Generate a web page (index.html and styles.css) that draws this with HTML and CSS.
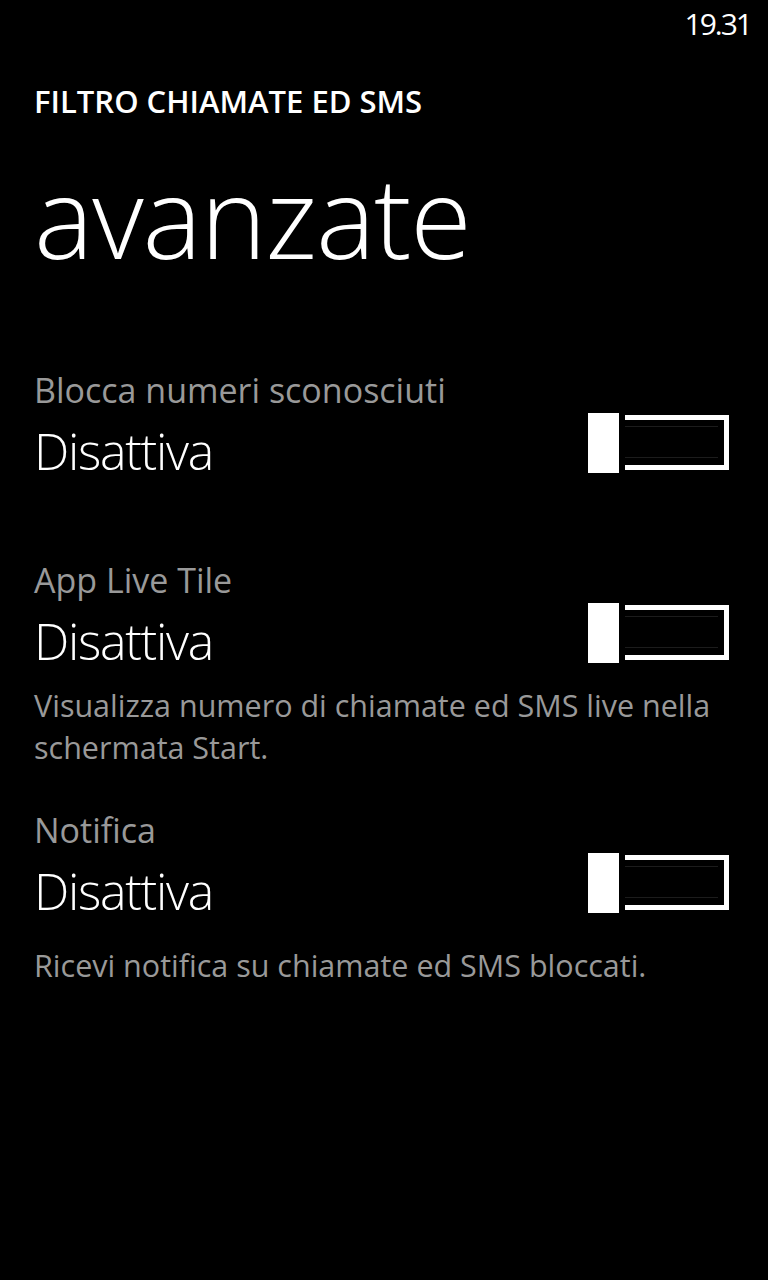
FILE: index.html
```html
<!DOCTYPE html>
<html lang="it">
<head>
  <meta charset="UTF-8">
  <meta name="viewport" content="width=device-width, initial-scale=1.0">
  <title>Filtro chiamate ed SMS - avanzate</title>
  <link rel="stylesheet" href="styles.css">
</head>
<body>
  <!-- Barra di stato -->
  <div class="status">
    <span class="clock">19.31</span>
  </div>

  <!-- Titoli -->
  <header class="titles">
    <div class="app-title">FILTRO CHIAMATE ED SMS</div>
    <h1 class="page-title">avanzate</h1>
  </header>

  <!-- Impostazioni -->
  <main class="settings">
    <section class="setting">
      <div class="setting-label">Blocca numeri sconosciuti</div>
      <div class="setting-row">
        <span class="setting-value">Disattiva</span>
        <span class="toggle"><span class="toggle-thumb"></span><span class="toggle-track"><span class="toggle-fill"></span></span></span>
      </div>
    </section>

    <section class="setting">
      <div class="setting-label">App Live Tile</div>
      <div class="setting-row">
        <span class="setting-value">Disattiva</span>
        <span class="toggle"><span class="toggle-thumb"></span><span class="toggle-track"><span class="toggle-fill"></span></span></span>
      </div>
      <p class="setting-desc">Visualizza numero di chiamate ed SMS live nella schermata Start.</p>
    </section>

    <section class="setting">
      <div class="setting-label">Notifica</div>
      <div class="setting-row">
        <span class="setting-value">Disattiva</span>
        <span class="toggle"><span class="toggle-thumb"></span><span class="toggle-track"><span class="toggle-fill"></span></span></span>
      </div>
      <p class="setting-desc setting-desc--spaced">Ricevi notifica su chiamate ed SMS bloccati.</p>
    </section>
  </main>
</body>
</html>
```

FILE: styles.css
```css
body {
  margin: 0;
  padding: 0;
  background: #000;
  color: #fff;
  font-family: "Open Sans", "Noto Sans", sans-serif;
  width: 768px;
  height: 1280px;
  overflow: hidden;
}
.status {
  height: 48px;
  line-height: 48px;
  font-size: 30px;
  letter-spacing: -2px;
  text-align: right;
  padding-right: 17px;
}
.titles {
  padding-left: 34px;
}
.app-title {
  margin-top: 33px;
  font-size: 31px;
  line-height: 40px;
  font-weight: 600;
}
.page-title {
  margin: 30px 0 0;
  font-size: 112px;
  line-height: 130px;
  font-weight: 300;
  letter-spacing: -1.2px;
}
.settings {
  padding: 88px 39px 0 34px;
}
.setting {
  display: flex;
  flex-direction: column;
  margin-bottom: 41.4px;
}
.setting-label {
  font-size: 34px;
  line-height: 42px;
  color: #999;
}
.setting-row {
  display: flex;
  justify-content: space-between;
  align-items: flex-start;
  margin-top: 9.8px;
  margin-bottom: 37px;
}
.setting-value {
  font-size: 50px;
  line-height: 60px;
  font-weight: 300;
  letter-spacing: -1.3px;
}
/* interruttore spento */
.toggle {
  display: flex;
  gap: 6px;
  height: 60px;
  margin-top: -8px;
}
.toggle-thumb {
  width: 31px;
  height: 60px;
  background: #fff;
}
.toggle-track {
  box-sizing: border-box;
  width: 104px;
  height: 55px;
  margin-top: 2px;
  border: 5px solid #fff;
  border-left: none;
  padding: 6px 6px 7px 0;
}
.toggle-fill {
  display: block;
  box-sizing: border-box;
  height: 100%;
  border-top: 1px solid #1c1c1c;
  border-bottom: 1px solid #1c1c1c;
}
.setting-desc {
  margin: -24.4px 0 0;
  font-size: 30.5px;
  line-height: 42px;
  color: #999;
}
.setting-desc--spaced {
  margin-top: -13.4px;
}
```
